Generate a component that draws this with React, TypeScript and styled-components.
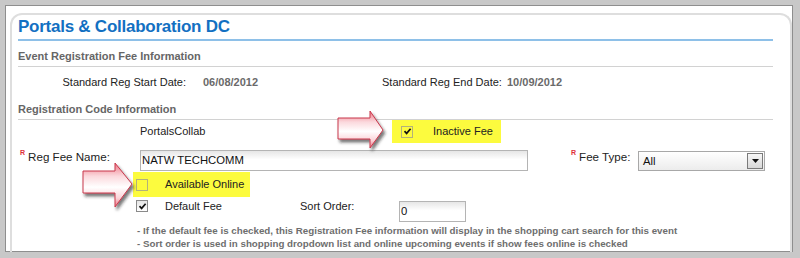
import React from 'react';
import styled, { createGlobalStyle } from 'styled-components';

const GlobalStyle = createGlobalStyle`
  html, body {
    margin: 0;
    padding: 0;
    background: #ffffff;
  }
  body {
    font-family: "Liberation Sans", Arial, sans-serif;
  }
`;

interface ArrowProps {
  left: number;
  top: number;
  width: number;
  height: number;
  d: string;
  id: string;
}

// callout arrow pointing right (the pink ones in the screenshot)
const Arrow: React.FC<ArrowProps> = ({ left, top, width, height, d, id }) => (
  <ArrowWrap $left={left} $top={top}>
    <svg width={width} height={height} viewBox={`0 0 ${width} ${height}`}>
      <defs>
        <linearGradient id={`${id}-g`} x1="0" y1="0" x2="0" y2="1">
          <stop offset="0" stopColor="#ee7584" />
          <stop offset="0.3" stopColor="#fbd9dd" />
          <stop offset="0.55" stopColor="#ffffff" />
          <stop offset="0.8" stopColor="#fbd3d8" />
          <stop offset="1" stopColor="#ec7080" />
        </linearGradient>
        <filter id={`${id}-s`} x="-20%" y="-20%" width="150%" height="150%">
          <feDropShadow dx="2" dy="3" stdDeviation="1.6" floodColor="#222" floodOpacity="0.6" />
        </filter>
      </defs>
      <path d={d} fill={`url(#${id}-g)`} stroke="#c8384c" strokeWidth="1" strokeLinejoin="round" filter={`url(#${id}-s)`} />
    </svg>
  </ArrowWrap>
);

const Check: React.FC<{ checked?: boolean; $faded?: boolean }> = ({ checked, $faded }) => (
  <CheckBox $faded={$faded}>
    {checked && (
      <svg width="9" height="9" viewBox="0 0 9 9">
        <path d="M1.5 4.2 L3.6 6.4 L7.6 1.8" fill="none" stroke="#111" strokeWidth="1.7" />
      </svg>
    )}
  </CheckBox>
);

const App: React.FC = () => {
  return (
    <>
      <GlobalStyle />
      <Frame>
        <Card>
          <Title>Portals &amp; Collaboration DC</Title>
          <SectionHead $pt={5}>Event Registration Fee Information</SectionHead>

          <DateRow>
            <Cell $w={168} $align="right">Standard Reg Start Date:</Cell>
            <Value $ml={17} $w={179}>06/08/2012</Value>
            <Cell $w={118} $align="right">Standard Reg End Date:</Cell>
            <Value $ml={7}>10/09/2012</Value>
          </DateRow>

          <SectionHead $pt={2}>Registration Code Information</SectionHead>

          <FormRow $h={23}>
            <LabelCell />
            <Plain $ml={4} $w={252}>PortalsCollab</Plain>
            <Highlight $w={109} $pl={9}>
              <Check checked $faded />
              <CheckText $ml={20}>Inactive Fee</CheckText>
            </Highlight>
          </FormRow>

          <FormRow $h={29} $pt={7}>
            <LabelCell>
              <Req>R</Req>
              Reg Fee Name:
            </LabelCell>
            <TextInput $ml={4} $w={388}>NATW TECHCOMM</TextInput>
            <Req $ml={43}>R</Req>
            <FieldLabel>Fee Type:</FieldLabel>
            <SelectBox>
              <span>All</span>
              <DropButton>
                <svg width="7" height="4" viewBox="0 0 7 4">
                  <path d="M0 0 L7 0 L3.5 4 Z" fill="#111" />
                </svg>
              </DropButton>
            </SelectBox>
          </FormRow>

          <FormRow $h={25}>
            <LabelCell />
            <Highlight $ml={-3} $w={117} $pl={3}>
              <Check $faded />
              <CheckText $ml={17}>Available Online</CheckText>
            </Highlight>
          </FormRow>

          <FormRow $h={26} $pt={3}>
            <LabelCell />
            <Check checked />
            <CheckText $ml={17} $w={135}>Default Fee</CheckText>
            <Plain $w={99}>Sort Order:</Plain>
            <TextInput $w={67} $mt={1}>0</TextInput>
          </FormRow>

          <Notes>
            <div>- If the default fee is checked, this Registration Fee information will display in the shopping cart search for this event</div>
            <div>- Sort order is used in shopping dropdown list and online upcoming events if show fees online is checked</div>
          </Notes>
        </Card>

        <Arrow
          id="a1"
          left={336}
          top={108}
          width={60}
          height={52}
          d="M2 10 L34 10 L34 3 L47 22 L34 40 L34 31 L2 31 Z"
        />
        <Arrow
          id="a2"
          left={81}
          top={158}
          width={64}
          height={60}
          d="M2 13 L34 13 L34 5 L51 26 L34 49 L34 35 L2 35 Z"
        />
      </Frame>
    </>
  );
};

export default App;

const Frame = styled.div`
  position: relative;
  width: 800px;
  height: 258px;
  box-sizing: border-box;
  border-style: solid;
  border-color: #c8c8c8;
  border-width: 5px 7px 6px 5px;
  box-shadow: inset 1px 1px 0 #8e8e8e, inset -1px -1px 0 #8e8e8e;
  padding: 8px 1px 0 5px;
  overflow: hidden;
  background: #ffffff;
`;

const Card = styled.div`
  height: 100%;
  box-sizing: border-box;
  border: 2px solid #dedede;
  border-bottom: none;
  border-radius: 12px 12px 0 0;
  padding: 0 17px 0 6px;
`;

const Title = styled.div`
  height: 24px;
  line-height: 24px;
  font-size: 17px;
  letter-spacing: -0.25px;
  font-weight: bold;
  color: #1270c2;
  border-bottom: 2px solid #8ec0e8;
`;

const SectionHead = styled.div<{ $pt: number }>`
  padding-top: ${p => p.$pt}px;
  line-height: 20px;
  font-size: 11px;
  font-weight: bold;
  color: #666666;
  border-bottom: 1px solid #d2d2d2;
`;

const DateRow = styled.div`
  display: flex;
  align-items: center;
  height: 30px;
  font-size: 11px;
  color: #222222;
`;

const Cell = styled.span<{ $w: number; $align?: string }>`
  width: ${p => p.$w}px;
  text-align: ${p => p.$align || 'left'};
  white-space: nowrap;
`;

const Value = styled.span<{ $ml: number; $w?: number }>`
  margin-left: ${p => p.$ml}px;
  width: ${p => (p.$w ? `${p.$w}px` : 'auto')};
  font-weight: bold;
  color: #6a6a6a;
`;

const FormRow = styled.div<{ $h: number; $pt?: number }>`
  display: flex;
  align-items: ${p => (p.$pt ? 'flex-start' : 'center')};
  height: ${p => p.$h}px;
  padding-top: ${p => p.$pt || 0}px;
  box-sizing: border-box;
  font-size: 11px;
  line-height: 13px;
  color: #222222;
`;

const LabelCell = styled.span`
  display: flex;
  align-items: flex-start;
  width: 118px;
  flex-shrink: 0;
  padding-left: 2px;
  box-sizing: border-box;
  line-height: 14px;
  font-size: 11.6px;
  white-space: nowrap;
`;

const Req = styled.span<{ $ml?: number }>`
  margin-left: ${p => p.$ml || 0}px;
  margin-right: 3px;
  margin-top: -2px;
  font-size: 7px;
  line-height: 9px;
  font-weight: bold;
  color: #e0303a;
`;

const FieldLabel = styled.span`
  width: 59px;
  line-height: 14px;
  font-size: 11.6px;
  color: #222222;
`;

const Plain = styled.span<{ $ml?: number; $w: number }>`
  margin-left: ${p => p.$ml || 0}px;
  width: ${p => p.$w}px;
  flex-shrink: 0;
  white-space: nowrap;
`;

const Highlight = styled.div<{ $ml?: number; $w: number; $pl: number }>`
  display: flex;
  align-items: center;
  align-self: stretch;
  margin-left: ${p => p.$ml || 0}px;
  width: ${p => p.$w}px;
  padding-left: ${p => p.$pl}px;
  box-sizing: border-box;
  background: #fcfb3e;
`;

const CheckBox = styled.span<{ $faded?: boolean }>`
  display: inline-flex;
  align-items: center;
  justify-content: center;
  width: 12px;
  height: 12px;
  box-sizing: border-box;
  flex-shrink: 0;
  border: 1px solid ${p => (p.$faded ? '#b3b27a' : '#8a8a8a')};
  background: ${p => (p.$faded ? 'transparent' : 'linear-gradient(#e6e6e6, #ffffff)')};
`;

const CheckText = styled.span<{ $ml: number; $w?: number }>`
  margin-left: ${p => p.$ml}px;
  width: ${p => (p.$w ? `${p.$w}px` : 'auto')};
  flex-shrink: 0;
  font-size: 11px;
  color: #222222;
  white-space: nowrap;
`;

const TextInput = styled.div<{ $ml?: number; $mt?: number; $w: number }>`
  display: flex;
  align-items: center;
  margin-left: ${p => p.$ml || 0}px;
  margin-top: ${p => p.$mt || 0}px;
  width: ${p => p.$w}px;
  height: 21px;
  flex-shrink: 0;
  box-sizing: border-box;
  padding-left: 1px;
  border: 1px solid #b4b4b4;
  background: linear-gradient(#e6e6e6, #ffffff 45%);
  font-size: 11.3px;
  color: #111111;
`;

const SelectBox = styled.div`
  display: flex;
  align-items: center;
  justify-content: space-between;
  margin-top: 1px;
  width: 127px;
  height: 20px;
  flex-shrink: 0;
  box-sizing: border-box;
  padding: 0 1px 0 4px;
  border: 1px solid #a8a8a8;
  background: linear-gradient(#ffffff, #ececec);
  font-size: 11.3px;
  color: #111111;
`;

const DropButton = styled.span`
  display: flex;
  align-items: center;
  justify-content: center;
  width: 16px;
  height: 16px;
  box-sizing: border-box;
  border: 1px solid #7a7a7a;
  background: linear-gradient(#f6f6f6, #d8d8d8);
`;

const Notes = styled.div`
  padding-top: 1px;
  padding-left: 119px;
  font-size: 9.75px;
  line-height: 13px;
  font-weight: bold;
  color: #6e6e6e;
  white-space: nowrap;
`;

const ArrowWrap = styled.div<{ $left: number; $top: number }>`
  position: absolute;
  left: ${p => p.$left - 5}px;
  top: ${p => p.$top - 5}px;
  line-height: 0;
`;
